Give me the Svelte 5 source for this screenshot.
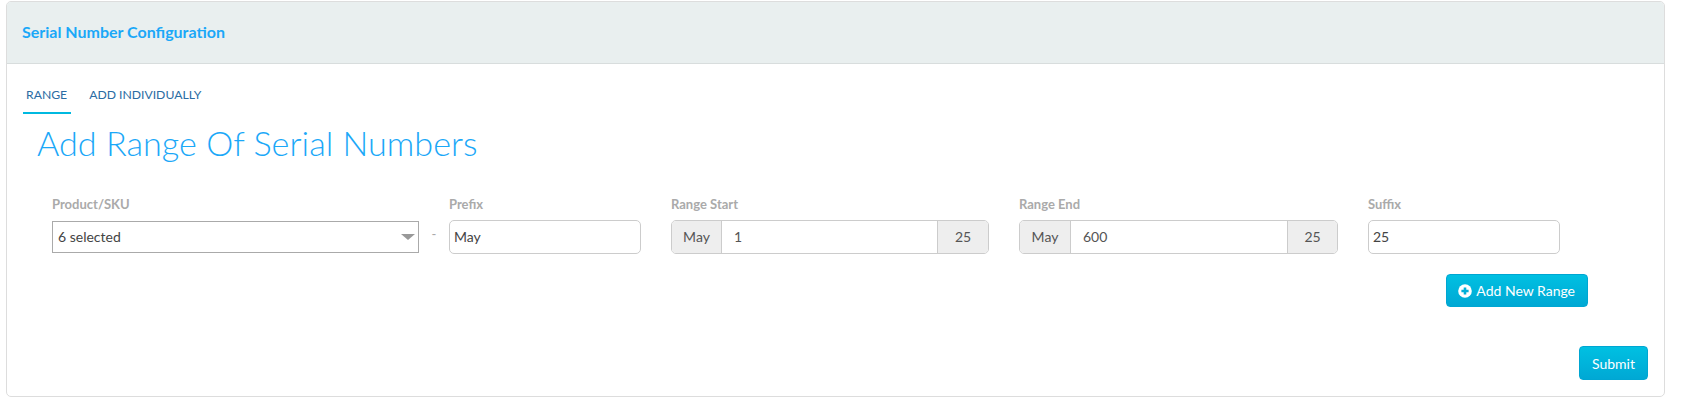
<script>
  const addon = [
    { label: 'Range Start', pre: 'May', val: '1', post: '25', cls: 'start' },
    { label: 'Range End', pre: 'May', val: '600', post: '25', cls: 'end' }
  ];
</script>

<div class="panel">
  <header class="head"><h2>Serial Number Configuration</h2></header>
  <nav class="tabs">
    <span class="tab active">RANGE</span>
    <span class="tab">ADD INDIVIDUALLY</span>
  </nav>
  <h1>Add Range Of Serial Numbers</h1>
  <div class="row">
    <div class="field sku">
      <span class="label">Product/SKU</span>
      <div class="select"><span>6 selected</span><i class="caret"></i></div>
    </div>
    <span class="dash">-</span>
    <div class="field prefix">
      <span class="label">Prefix</span>
      <input class="input" value="May" />
    </div>
    {#each addon as a}
      <div class="field {a.cls}">
        <span class="label">{a.label}</span>
        <div class="group">
          <span class="add pre">{a.pre}</span>
          <input class="inner" value={a.val} />
          <span class="add post">{a.post}</span>
        </div>
      </div>
    {/each}
    <div class="field suffix">
      <span class="label">Suffix</span>
      <input class="input" value="25" />
    </div>
  </div>
  <div class="actions">
    <button class="btn add-range">
      <svg viewBox="0 0 14 14" width="14" height="14"><circle cx="7" cy="7" r="6.8" fill="#fff"/><path d="M7 3.4v7.2M3.4 7h7.2" stroke="#00b0d8" stroke-width="2.6"/></svg>
      Add New Range
    </button>
  </div>
  <div class="submit-row"><button class="btn">Submit</button></div>
</div>

<style>
  :global(body) { margin: 0; background: #fff; font-family: Lato, "Open Sans", sans-serif; }
  .panel {
    box-sizing: border-box; height: 396px; margin: 1px 20px 0 6px;
    border: 1px solid #ddd; border-radius: 5px; overflow: hidden; background: #fff;
  }
  .head {
    box-sizing: border-box; height: 62px; background: #e9efef; border-bottom: 1px solid #d8dddd;
    display: flex; align-items: center; padding: 0 0 3px 15px;
  }
  h2 { margin: 0; font-size: 16px; font-weight: 700; color: #1ba8f8; }
  .tabs { display: flex; margin: 15px 0 0 16px; height: 35px; gap: 0; }
  .tab {
    box-sizing: border-box; height: 35px; padding: 7px 3px 0 3px; margin-right: 16px;
    font-size: 12.2px; color: #2b6ca3; line-height: 18px;
  }
  .tab.active { border-bottom: 2px solid #00b9e0; padding-right: 4px; margin-right: 15px; }
  h1 { margin: 9px 0 0 30px; font-size: 34.2px; line-height: 40px; font-weight: 300; color: #1ba8f8; }
  .row { display: flex; align-items: flex-start; margin: 33px 0 0 45px; height: 58px; }
  .field { display: flex; flex-direction: column; margin-right: 30px; }
  .label { font-size: 13px; font-weight: 700; color: #aaa; line-height: 16px; height: 16px; margin-bottom: 8px; }
  .sku { width: 367px; margin-right: 0; }
  .dash { width: 30px; text-align: center; color: #aaa; font-size: 13px; margin-top: 23px; line-height: 30px; }
  .prefix { width: 192px; }
  .start { width: 318px; }
  .end { width: 319px; }
  .end .pre { width: 50px; }
  .end .post { width: 49px; }
  .suffix { width: 192px; margin-right: 0; }
  .select {
    box-sizing: border-box; height: 32px; margin-top: 1px; border: 1px solid #aaa; display: flex; align-items: center;
    justify-content: space-between; padding: 0 5px 1px; font-size: 14px; color: #444;
  }
  .caret { width: 0; height: 0; border-left: 7px solid transparent; border-right: 7px solid transparent; border-top: 6px solid #999; margin: 1px -2px 0 0; }
  .input {
    box-sizing: border-box; height: 34px; width: 100%; border: 1px solid #ccc; border-radius: 5px;
    padding: 0 4px 2px; font: 14px Lato, sans-serif; color: #444; outline: none;
  }
  .group { display: flex; height: 34px; box-sizing: border-box; border: 1px solid #ccc; border-radius: 5px; overflow: hidden; }
  .add { background: #eee; font-size: 14px; color: #555; display: flex; align-items: center; justify-content: center; padding-bottom: 2px; }
  .pre { width: 49px; border-right: 1px solid #ccc; }
  .post { width: 50px; border-left: 1px solid #ccc; }
  .inner { flex: 1; min-width: 0; border: 0; outline: none; padding: 0 12px 2px; font: 14px Lato, sans-serif; color: #555; }
  .actions { display: flex; justify-content: flex-end; margin: 20px 76px 0 0; }
  .submit-row { display: flex; justify-content: flex-end; margin: 39px 16px 0 0; }
  .btn {
    box-sizing: border-box; height: 34px; padding: 0 12px; border: 1px solid #00a6d2; border-radius: 4px;
    background: linear-gradient(#00c0e2, #00a8d4); color: #fff; font: 14px Lato, sans-serif;
    display: flex; align-items: center; gap: 4px;
  }
  .add-range { height: 33px; padding: 0 12px 0 11px; }
</style>
